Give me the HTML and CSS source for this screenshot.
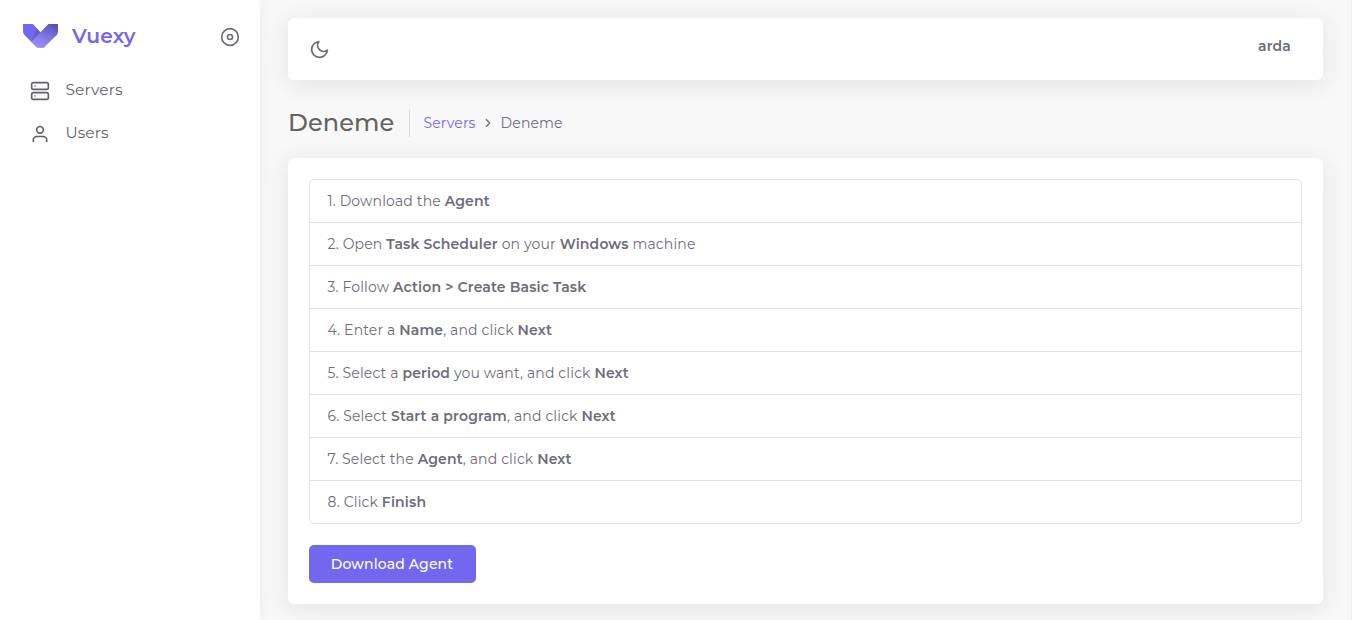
FILE: index.html
```html
<!DOCTYPE html>
<html lang="en">
<head>
<meta charset="utf-8">
<title>Deneme - Vuexy</title>
<link rel="stylesheet" href="styles.css">
</head>
<body>
<div class="app">
  <aside class="sidebar">
    <div class="brand-row">
      <svg class="logo" viewBox="0 0 139 95">
        <defs>
          <linearGradient id="shade" x1="1" y1="0.1" x2="0.5" y2="0.9"><stop offset="0" stop-color="#000" stop-opacity=".24"/><stop offset="1" stop-color="#fff" stop-opacity=".15"/></linearGradient>
          <linearGradient id="fold" x1="0.6" y1="0" x2="0.4" y2="1"><stop offset="0" stop-color="#eee" stop-opacity="0"/><stop offset="1" stop-color="#fff" stop-opacity=".1"/></linearGradient>
        </defs>
        <path fill="#7367f0" d="M0 0H39.2L69.3 32.3 101.4 0H138.8V29.8C138 37.4 135.8 42.6 132.2 45.4 128.7 48.3 112.3 64.5 83.1 94.1H56.3L6.7 44.4C2.5 40 .3 35.1 .3 29.8Z"/>
        <path fill="url(#shade)" d="M69.3 32.3 101.4 0H138.8V29.8C138 37.4 135.8 42.6 132.2 45.4 128.7 48.3 112.3 64.5 83.1 94.1H56.3L32.8 70.5Z"/>
        <path fill="#000" opacity=".1" d="M69.4 32.4 32.8 70.5 54 16.2Z"/>
        <path fill="url(#fold)" d="M69.4 32.4 32.8 70.7 56.3 94.1H83.1L130.4 47.1Z"/>
      </svg>
      <span class="brand">Vuexy</span>
      <svg class="icon toggle" viewBox="0 0 24 24"><circle cx="12" cy="12" r="10"/><circle cx="12" cy="12" r="3"/></svg>
    </div>
    <nav class="menu">
      <a class="menu-item"><svg class="icon" viewBox="0 0 24 24"><rect x="2" y="2" width="20" height="8" rx="2"/><rect x="2" y="14" width="20" height="8" rx="2"/><path d="M6 6h.01M6 18h.01"/></svg><span>Servers</span></a>
      <a class="menu-item"><svg class="icon" viewBox="0 0 24 24"><path d="M20 21v-2a4 4 0 0 0-4-4H8a4 4 0 0 0-4 4v2"/><circle cx="12" cy="7" r="4"/></svg><span>Users</span></a>
    </nav>
  </aside>
  <main class="content">
    <header class="navbar">
      <svg class="icon moon" viewBox="0 0 24 24"><path d="M21 12.79A9 9 0 1 1 11.21 3 7 7 0 0 0 21 12.79z"/></svg>
      <span class="user">arda</span>
    </header>
    <div class="page-head">
      <h1 class="title">Deneme</h1>
      <div class="crumbs"><a class="crumb-link">Servers</a><svg class="chevron" viewBox="0 0 24 24"><path d="M9 18l6-6-6-6"/></svg><span>Deneme</span></div>
    </div>
    <section class="card">
      <ul class="steps">
        <li>1. Download the <b>Agent</b></li>
        <li>2. Open <b>Task Scheduler</b> on your <b>Windows</b> machine</li>
        <li>3. Follow <b>Action &gt; Create Basic Task</b></li>
        <li>4. Enter a <b>Name</b>, and click <b>Next</b></li>
        <li>5. Select a <b>period</b> you want, and click <b>Next</b></li>
        <li>6. Select <b>Start a program</b>, and click <b>Next</b></li>
        <li>7. Select the <b>Agent</b>, and click <b>Next</b></li>
        <li>8. Click <b>Finish</b></li>
      </ul>
      <button class="button">Download Agent</button>
    </section>
  </main>
</div>
</body>
</html>
```
FILE: styles.css
```css
* { box-sizing: border-box; }
body { margin: 0; background: #f8f8f8; color: #6e6b7b; font: 14px/20px Montserrat, Inter, sans-serif; letter-spacing: .14px; }
.app { display: flex; height: 620px; overflow: hidden; border-right: 1px solid #f0f0f0; }
.sidebar { width: 260px; flex: none; background: #fff; box-shadow: 0 0 15px rgba(34, 41, 47, .05); }
.brand-row { display: flex; height: 72px; padding: 0 20px 0 23px; align-items: center; }
.logo { width: 35px; height: 24px; }
.brand { margin-left: 14px; color: #7367f0; font-size: 20.3px; font-weight: 600; }
.icon { width: 20px; height: 20px; fill: none; stroke: #6e6b7b; stroke-width: 2; stroke-linecap: round; stroke-linejoin: round; }
.toggle { margin: 0 0 0 auto; padding-top: 1px; height: 21px; }
.menu { display: flex; flex-direction: column; padding: 8px 30px 0; gap: 23px; }
.menu-item { display: flex; height: 20px; gap: 15.4px; color: #625f6e; font-size: 15.4px; line-height: 20px; }
.menu-item .icon { stroke: #625f6e; margin-top: 1px; }
.content { flex: 1; min-width: 0; padding: 18px 28px 0; }
.navbar { display: flex; height: 62px; padding: 0 32px 0 21px; justify-content: space-between; background: #fff; border-radius: 6px; box-shadow: 0 4px 24px rgba(34, 41, 47, .1); }
.moon { width: 21px; height: 21px; margin-top: 21px; }
.user { margin-top: 18px; font-weight: 600; }
.page-head { display: flex; height: 28px; margin: 29px 0 21px; align-items: center; }
.title { margin: 0; padding-right: 15px; border-right: 1px solid #d6dce1; color: #636363; font-size: 24px; line-height: 28px; font-weight: 500; }
.crumbs { display: flex; padding-left: 13px; align-items: center; }
.crumb-link { color: #7367f0; }
.chevron { width: 14px; height: 14px; margin: 0 6px 0 5px; fill: none; stroke: #6e6b7b; stroke-width: 2; stroke-linecap: round; stroke-linejoin: round; }
.card { height: 446px; padding: 21px; background: #fff; border-radius: 6px; box-shadow: 0 4px 24px rgba(34, 41, 47, .1); }
.steps { margin: 0 0 21px; padding: 0; list-style: none; border: 1px solid #e2e2e4; border-radius: 5px; }
.steps li { height: 43px; padding: 11px 17.5px 0; letter-spacing: .15px; }
.steps li:first-child { height: 42px; }
.steps li + li { border-top: 1px solid #e2e2e4; }
.steps b { font-weight: 600; }
.button { display: block; width: 167px; height: 38px; padding: 0 1px 0 0; border: 0; border-radius: 5px; background: #7367f0; color: #fff; font: 500 14px/38px Montserrat, Inter, sans-serif; letter-spacing: .14px; }
```
